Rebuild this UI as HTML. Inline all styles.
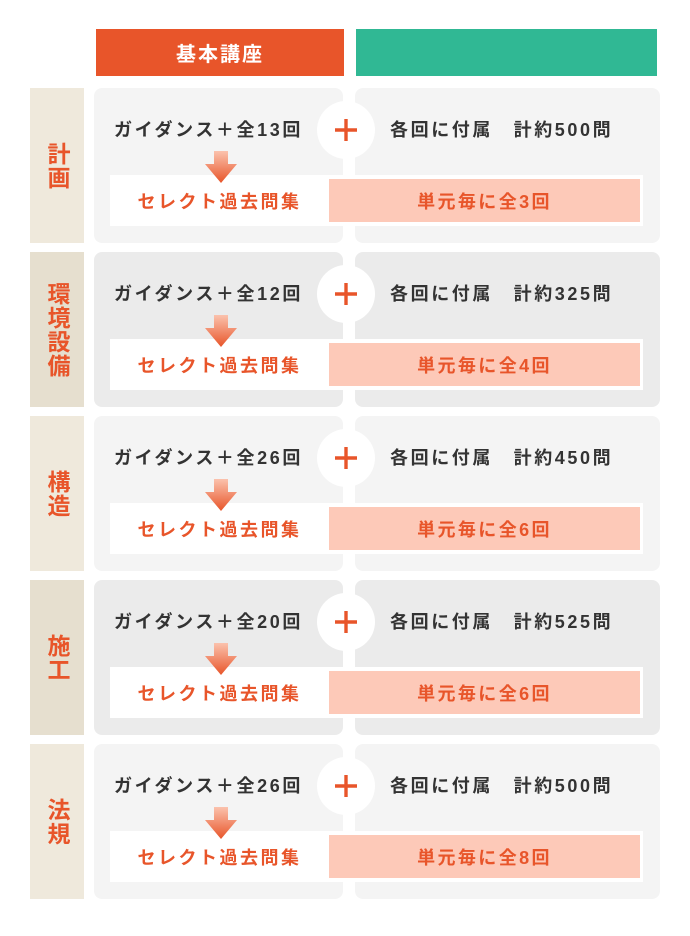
<!DOCTYPE html>
<html><head><meta charset="utf-8"><style>
*{margin:0;padding:0;box-sizing:border-box}
body{width:690px;height:936px;background:#fff;position:relative;font-family:"Liberation Sans","Noto Sans CJK JP",sans-serif;font-weight:bold;overflow:hidden}
.h{position:absolute;top:29px;height:47px}
.abs{position:absolute}
.lab{left:30px;width:54px;height:155px;background:#efe9dc;color:#e8552a;font-size:23px;display:flex;align-items:center;justify-content:center;text-align:center;line-height:28px;writing-mode:vertical-rl;letter-spacing:1px}
.lc{left:94px;width:249px;height:155px;border-radius:8px}
.rc{left:355px;width:305px;height:155px;border-radius:8px}
.t{font-size:18px;line-height:22px;color:#333;letter-spacing:2.6px;white-space:nowrap}
.circ{width:58px;height:58px;border-radius:50%;background:#fff;left:317px}
.wb{left:110px;width:533px;height:51px;background:#fff}
.pk{left:329px;width:311px;height:43px;background:#fdc9b8;color:#e8552a;font-size:18px;display:flex;align-items:center;justify-content:center;letter-spacing:2.4px}
.sel{left:110px;width:219px;height:51px;color:#e8552a;font-size:18px;display:flex;align-items:center;justify-content:center;letter-spacing:2.5px}
</style></head><body>
<div class="h abs" style="left:96px;width:248px;background:#e8552a;color:#fff;font-size:20px;letter-spacing:2px;display:flex;align-items:center;justify-content:center">基本講座</div>
<div class="h abs" style="left:356px;width:301px;background:#30b894"></div>
<div id="rows"></div>
<script>
var d=[["計画","13","500","3"],["環境設備","12","325","4"],["構造","26","450","6"],["施工","20","525","6"],["法規","26","500","8"]];
var h="";
d.forEach(function(r,i){var y=88+164*i;var bg=(i%2)?"#ebebeb":"#f4f4f4";var lb=(i%2)?"#e6dfcf":"#efe9dc";
h+='<div class="abs lab" style="top:'+y+'px;background:'+lb+'">'+r[0]+'</div>';
h+='<div class="abs lc" style="top:'+y+'px;background:'+bg+'"></div>';
h+='<div class="abs rc" style="top:'+y+'px;background:'+bg+'"></div>';
h+='<div class="abs t" style="left:114px;top:'+(y+31)+'px">ガイダンス＋全'+r[1]+'回</div>';
h+='<div class="abs t" style="left:390px;top:'+(y+31)+'px">各回に付属　計約'+r[2]+'問</div>';
h+='<div class="abs circ" style="top:'+(y+13)+'px"><svg width="58" height="58"><path d="M29 18V40M18 29H40" stroke="#e8552a" stroke-width="3.4"/></svg></div>';
h+='<div class="abs wb" style="top:'+(y+87)+'px"></div>';
h+='<div class="abs pk" style="top:'+(y+91)+'px">単元毎に全'+r[3]+'回</div>';
h+='<div class="abs sel" style="top:'+(y+87)+'px">セレクト過去問集</div>';
h+='<svg class="abs" style="left:204px;top:'+(y+63)+'px" width="34" height="33"><defs><linearGradient id="g'+i+'" x1="0" y1="0" x2="0" y2="1"><stop offset="0" stop-color="#fbc2ad"/><stop offset="1" stop-color="#e8552a"/></linearGradient></defs><path d="M10 0H24V13H33L17 32L1 13H10Z" fill="url(#g'+i+')"/></svg>';
});
document.getElementById("rows").innerHTML=h;
</script>
</body></html>
